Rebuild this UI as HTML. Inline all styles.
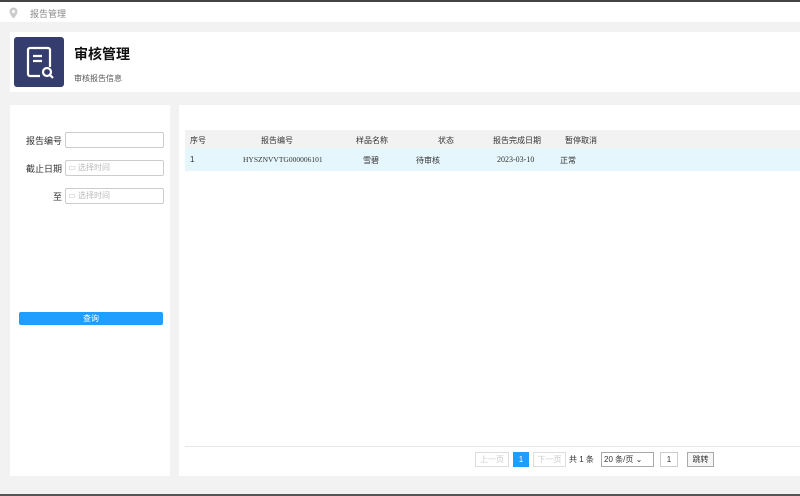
<!DOCTYPE html><html><head><meta charset="utf-8"><style>
body{margin:0;width:800px;height:496px;background:#f2f2f2;font-family:"Liberation Sans","Noto Sans CJK SC",sans-serif;position:relative;overflow:hidden;color:#333}
.a{position:absolute}
.lbl{font-size:9px;color:#333;text-align:right;width:52px;left:10px}
.inp{left:65px;width:97px;height:14px;border:1px solid #ccc;border-radius:2px;background:#fff;font-size:8px;color:#bbb;line-height:14px}
.th{font-size:8px;color:#333;top:135px}
.td{font-size:8px;color:#333;top:155px}
.pb{height:13px;border:1px solid #ddd;font-size:8px;line-height:13px;text-align:center;top:452px;background:#fff}
</style></head><body>
<div class="a" style="left:0;top:0;width:800px;height:2px;background:#444"></div>
<div class="a" style="left:0;top:2px;width:800px;height:20px;background:#fff"></div>
<svg class="a" style="left:9px;top:7px" width="9" height="12" viewBox="0 0 9 12"><path d="M4.5 0.5a4 4 0 0 1 4 4c0 3-4 7-4 7s-4-4-4-7a4 4 0 0 1 4-4z" fill="#ccc"/><circle cx="4.5" cy="4.5" r="1.5" fill="#fff"/></svg>
<div class="a" style="left:30px;top:7px;font-size:9px;color:#888">报告管理</div>
<div class="a" style="left:10px;top:32px;width:790px;height:60px;background:#fff"></div>
<div class="a" style="left:14px;top:37px;width:50px;height:50px;background:#353d6e;border-radius:3px"></div>
<svg class="a" style="left:14px;top:37px" width="50" height="50" viewBox="0 0 50 50"><path d="M36 30V13a2 2 0 0 0-2-2H16a2 2 0 0 0-2 2v24a2 2 0 0 0 2 2h10" fill="none" stroke="#fff" stroke-width="2.2"/><path d="M19 19h9M19 24h9" stroke="#fff" stroke-width="2.2"/><circle cx="33" cy="35" r="4" fill="none" stroke="#fff" stroke-width="2.2"/><path d="M36 38l3 3" stroke="#fff" stroke-width="2.2"/></svg>
<div class="a" style="left:74px;top:44px;font-size:14px;font-weight:bold;color:#111">审核管理</div>
<div class="a" style="left:74px;top:73px;font-size:8px;color:#555">审核报告信息</div>
<div class="a" style="left:10px;top:105px;width:160px;height:371px;background:#fff"></div>
<div class="a" style="left:179px;top:105px;width:621px;height:371px;background:#fff"></div>
<div class="a lbl" style="top:134px">报告编号</div>
<div class="a inp" style="top:132px"></div>
<div class="a lbl" style="top:162px">截止日期</div>
<div class="a inp" style="top:160px">&nbsp;▭ 选择时间</div>
<div class="a lbl" style="top:190px">至</div>
<div class="a inp" style="top:188px">&nbsp;▭ 选择时间</div>
<div class="a" style="left:19px;top:312px;width:144px;height:13px;background:#1e9fff;border-radius:2px;color:#fff;font-size:8px;text-align:center;line-height:13px">查询</div>
<div class="a" style="left:185px;top:130px;width:615px;height:18px;background:#f2f2f2"></div>
<div class="a" style="left:185px;top:148px;width:615px;height:23px;background:#e6f6fd"></div>
<div class="a th" style="left:190px">序号</div>
<div class="a th" style="left:261px">报告编号</div>
<div class="a th" style="left:356px">样品名称</div>
<div class="a th" style="left:438px">状态</div>
<div class="a th" style="left:493px">报告完成日期</div>
<div class="a th" style="left:565px">暂停取消</div>
<div class="a td" style="left:190px">1</div>
<div class="a td" style="left:243px;font-family:'Liberation Serif',serif;font-size:7.5px">HYSZNVVTG000006101</div>
<div class="a td" style="left:363px">雪碧</div>
<div class="a td" style="left:416px">待审核</div>
<div class="a td" style="left:497px;font-family:'Liberation Serif',serif">2023-03-10</div>
<div class="a td" style="left:560px">正常</div>
<div class="a" style="left:185px;top:446px;width:615px;height:1px;background:#e6e6e6"></div>
<div class="a pb" style="left:475px;width:32px;color:#ccc">上一页</div>
<div class="a pb" style="left:513px;width:14px;background:#1e9fff;border-color:#1e9fff;color:#fff">1</div>
<div class="a pb" style="left:533px;width:31px;color:#ccc">下一页</div>
<div class="a" style="left:569px;top:454px;font-size:8px">共 1 条</div>
<div class="a pb" style="left:601px;width:49px;border-color:#aaa;text-align:left;padding-left:2px">20 条/页 ⌄</div>
<div class="a pb" style="left:660px;width:16px;border-color:#ccc">1</div>
<div class="a pb" style="left:687px;width:25px;border-color:#aaa;background:#f5f5f5">跳转</div>
<div class="a" style="left:0;top:494px;width:800px;height:2px;background:#555"></div>
</body></html>
